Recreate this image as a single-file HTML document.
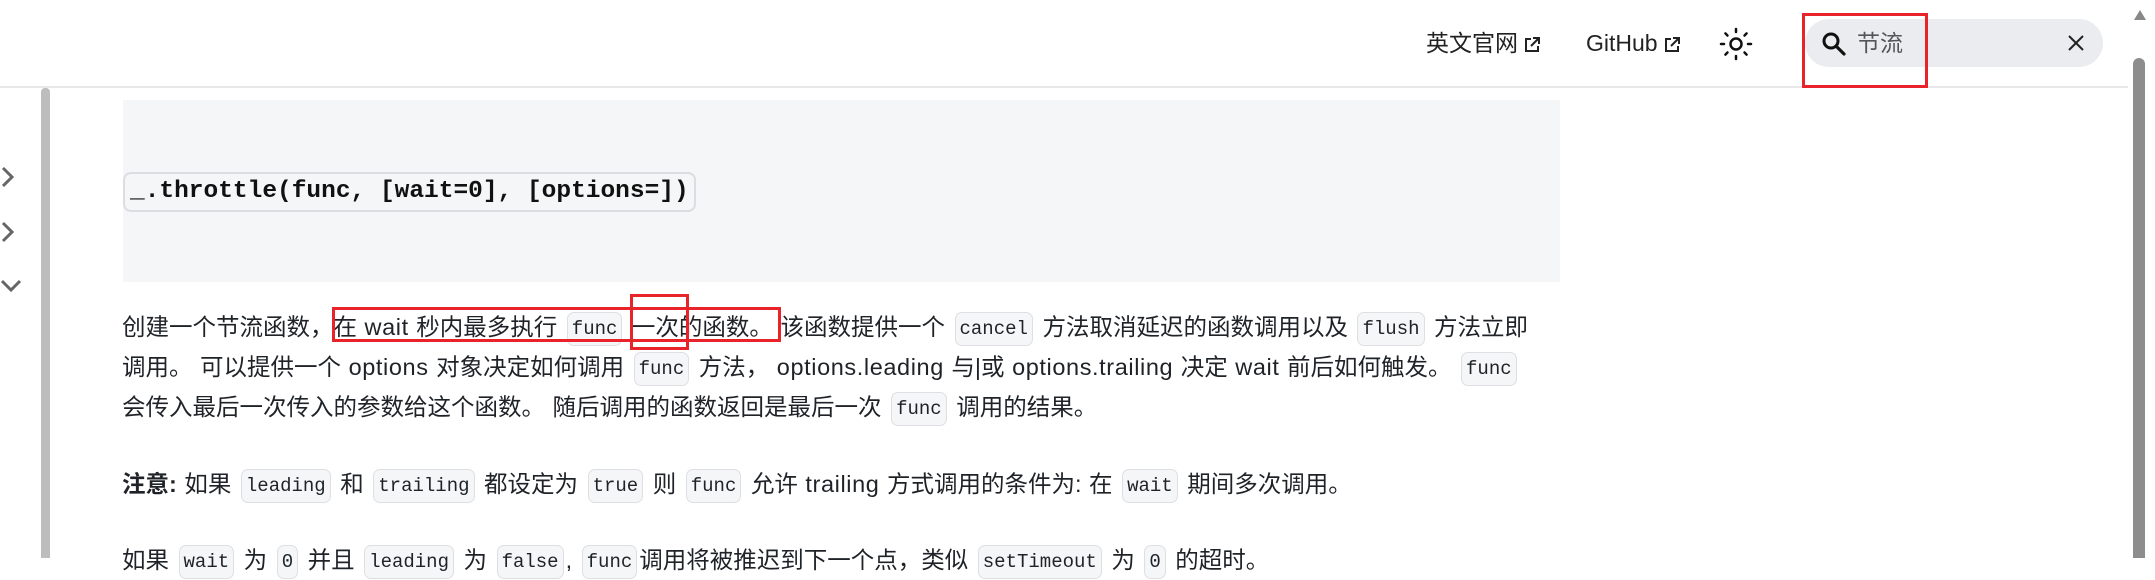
<!DOCTYPE html>
<html><head><meta charset="utf-8"><style>
*{margin:0;padding:0;box-sizing:border-box}
body{width:2155px;height:558px;overflow:hidden;background:#fff;font-family:"Liberation Sans","Noto Sans CJK SC",sans-serif;color:#1f2328;position:relative}
.hdr{position:absolute;left:0;top:0;width:2128px;height:88px;border-bottom:2px solid #e8e8ea}
.nav{position:absolute;top:26px;font-size:23px;line-height:34px;color:#222}
.ext{display:inline-block;vertical-align:middle;margin-left:4px}
.search{position:absolute;left:1805px;top:19px;width:298px;height:48px;border-radius:24px;background:#ebecef}
.red{position:absolute;border:3px solid #e8232a}
.side{position:absolute;left:41px;top:88px;width:9px;height:470px;background:#bdbdbd;border-radius:4px 4px 0 0}
.chev{position:absolute;left:0}
.codeblk{position:absolute;left:123px;top:100px;width:1437px;height:182px;background:#f5f6f7}
.sig{position:absolute;left:0;top:72px;height:40px;padding:0 5px;border:2px solid #dcdde0;border-radius:8px;background:#f5f6f7;font-family:"Liberation Mono",monospace;font-weight:bold;font-size:24.5px;line-height:36px;color:#111}
.p{position:absolute;left:122px;font-size:23.5px;line-height:40px;white-space:nowrap;word-spacing:1px}
.l{letter-spacing:0.6px}
code{display:inline-block;line-height:26px;vertical-align:middle;font-family:"Liberation Mono",monospace;font-size:19px;background:#f5f6f7;border:1.5px solid #dedfe3;border-radius:7px;padding:3px 4px;margin:0 2px;word-spacing:0;letter-spacing:0}
.sb{position:absolute;left:2128px;top:0;width:27px;height:558px;background:#fff}
</style></head><body>
<div class="hdr"></div>
<div class="nav" style="left:1426px">英文官网<svg class="ext" width="20" height="20" viewBox="0 0 20 20"><path d="M9 4H4v12h12v-5" fill="none" stroke="#222" stroke-width="2"/><path d="M11 3h6v6M17 3l-8 8" fill="none" stroke="#222" stroke-width="2"/></svg></div>
<div class="nav" style="left:1586px">GitHub<svg class="ext" width="20" height="20" viewBox="0 0 20 20"><path d="M9 4H4v12h12v-5" fill="none" stroke="#222" stroke-width="2"/><path d="M11 3h6v6M17 3l-8 8" fill="none" stroke="#222" stroke-width="2"/></svg></div>
<svg style="position:absolute;left:1719px;top:27px" width="34" height="34" viewBox="0 0 34 34"><circle cx="17" cy="17" r="5.5" fill="none" stroke="#111" stroke-width="2.5"/><g stroke="#111" stroke-width="2.5" stroke-linecap="round"><path d="M17 2v3M17 29v3M2 17h3M29 17h3M6.4 6.4l2.1 2.1M25.5 25.5l2.1 2.1M6.4 27.6l2.1-2.1M25.5 8.5l2.1-2.1"/></g></svg>
<div class="search">
<svg style="position:absolute;left:16px;top:12px" width="26" height="26" viewBox="0 0 26 26"><circle cx="10" cy="10" r="7" fill="none" stroke="#111" stroke-width="3"/><path d="M15 15l8 8" stroke="#111" stroke-width="3.2" stroke-linecap="round"/></svg>
<div style="position:absolute;left:52px;top:7px;font-size:23px;line-height:34px;color:#555">节流</div>
<svg style="position:absolute;left:263px;top:16px" width="16" height="16" viewBox="0 0 16 16"><path d="M1 1l14 14M15 1L1 15" stroke="#222" stroke-width="2"/></svg>
</div>
<div class="red" style="left:1802px;top:13px;width:126px;height:75px"></div>
<div class="side"></div>
<svg class="chev" style="top:165px" width="16" height="24" viewBox="0 0 16 24"><path d="M3 3l9 9-9 9" fill="none" stroke="#666" stroke-width="3"/></svg>
<svg class="chev" style="top:220px" width="16" height="24" viewBox="0 0 16 24"><path d="M3 3l9 9-9 9" fill="none" stroke="#666" stroke-width="3"/></svg>
<svg class="chev" style="top:278px" width="22" height="16" viewBox="0 0 22 16"><path d="M2 3l9 9 9-9" fill="none" stroke="#666" stroke-width="3"/></svg>
<div class="codeblk"><div class="sig">_.throttle(func, [wait=0], [options=])</div></div>
<div class="p" style="top:307px">创建一个节流函数，在 <span class="l">wait</span> 秒内最多执行 <code>func</code> 一次的函数。 该函数提供一个 <code>cancel</code> 方法取消延迟的函数调用以及 <code>flush</code> 方法立即<br>调用。 可以提供一个 <span class="l">options</span> 对象决定如何调用 <code>func</code> 方法， <span class="l">options.leading</span> 与|或 <span class="l">options.trailing</span> 决定 <span class="l">wait</span> 前后如何触发。 <code>func</code><br>会传入最后一次传入的参数给这个函数。 随后调用的函数返回是最后一次 <code>func</code> 调用的结果。</div>
<div class="p" style="top:464px"><b>注意:</b> 如果 <code>leading</code> 和 <code>trailing</code> 都设定为 <code>true</code> 则 <code>func</code> 允许 <span class="l">trailing</span> 方式调用的条件为: 在 <code>wait</code> 期间多次调用。</div>
<div class="p" style="top:540px">如果 <code>wait</code> 为 <code>0</code> 并且 <code>leading</code> 为 <code>false</code>, <code>func</code>调用将被推迟到下一个点，类似 <code>setTimeout</code> 为 <code>0</code> 的超时。</div>
<div class="red" style="left:332px;top:307px;width:449px;height:35px"></div>
<div class="red" style="left:630px;top:294px;width:59px;height:56px"></div>
<div class="sb"><svg style="position:absolute;left:5px;top:9px" width="14" height="12" viewBox="0 0 14 12"><path d="M7 1l6 10H1z" fill="#888"/></svg><div style="position:absolute;left:5px;top:58px;width:12px;height:500px;background:#8d8d8d;border-radius:6px 6px 0 0"></div></div>
</body></html>
